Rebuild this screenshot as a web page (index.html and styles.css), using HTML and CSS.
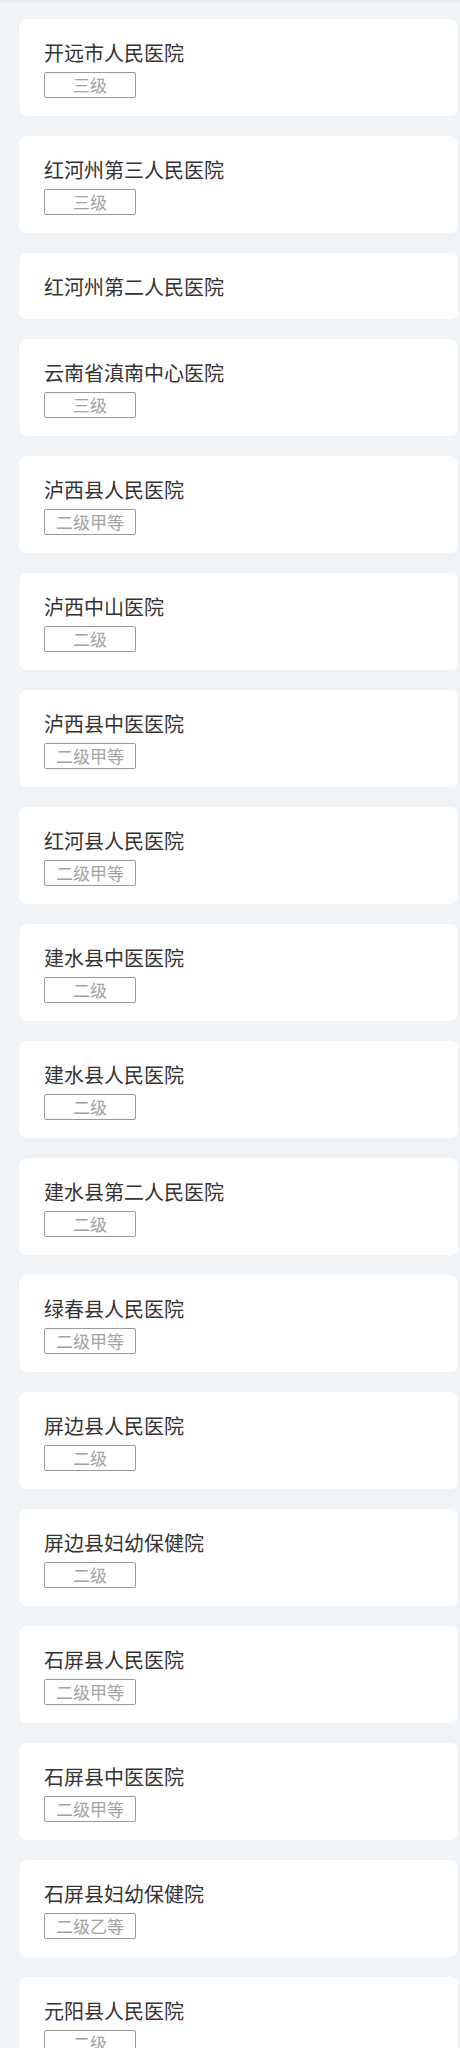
FILE: index.html
```html
<!DOCTYPE html>
<html lang="zh">
<head>
<meta charset="utf-8">
<link rel="stylesheet" href="styles.css">
</head>
<body>
<div class="topbar"></div>
<div class="list">
  <div class="card"><div class="name">开远市人民医院</div><div class="tag">三级</div></div>
  <div class="card"><div class="name">红河州第三人民医院</div><div class="tag">三级</div></div>
  <div class="card"><div class="name">红河州第二人民医院</div></div>
  <div class="card"><div class="name">云南省滇南中心医院</div><div class="tag">三级</div></div>
  <div class="card"><div class="name">泸西县人民医院</div><div class="tag">二级甲等</div></div>
  <div class="card"><div class="name">泸西中山医院</div><div class="tag">二级</div></div>
  <div class="card"><div class="name">泸西县中医医院</div><div class="tag">二级甲等</div></div>
  <div class="card"><div class="name">红河县人民医院</div><div class="tag">二级甲等</div></div>
  <div class="card"><div class="name">建水县中医医院</div><div class="tag">二级</div></div>
  <div class="card"><div class="name">建水县人民医院</div><div class="tag">二级</div></div>
  <div class="card"><div class="name">建水县第二人民医院</div><div class="tag">二级</div></div>
  <div class="card"><div class="name">绿春县人民医院</div><div class="tag">二级甲等</div></div>
  <div class="card"><div class="name">屏边县人民医院</div><div class="tag">二级</div></div>
  <div class="card"><div class="name">屏边县妇幼保健院</div><div class="tag">二级</div></div>
  <div class="card"><div class="name">石屏县人民医院</div><div class="tag">二级甲等</div></div>
  <div class="card"><div class="name">石屏县中医医院</div><div class="tag">二级甲等</div></div>
  <div class="card"><div class="name">石屏县妇幼保健院</div><div class="tag">二级乙等</div></div>
  <div class="card"><div class="name">元阳县人民医院</div><div class="tag">二级</div></div>
</div>
</body>
</html>
```

FILE: styles.css
```css
html, body {
  margin: 0;
  padding: 0;
  background: #f1f4f6;
  font-family: "Noto Sans CJK SC", "Noto Sans", sans-serif;
}
.topbar {
  height: 3px;
  background: #e8edf0;
}
.list {
  display: flex;
  flex-direction: column;
  gap: 20px;
  padding: 16px 2px 0 19px;
}
.card {
  background: #ffffff;
  border-radius: 7px;
  padding: 20px 25px 18px 25px;
  box-shadow: 0 0 2px rgba(0, 0, 0, 0.04);
}
.name {
  font-size: 20px;
  line-height: 28px;
  color: #333333;
}
.tag {
  margin-top: 5px;
  box-sizing: border-box;
  width: 92px;
  height: 26px;
  border: 1px solid #9a9a9a;
  border-radius: 2px;
  color: #a3a3a3;
  font-size: 17px;
  line-height: 24px;
  text-align: center;
}
```
